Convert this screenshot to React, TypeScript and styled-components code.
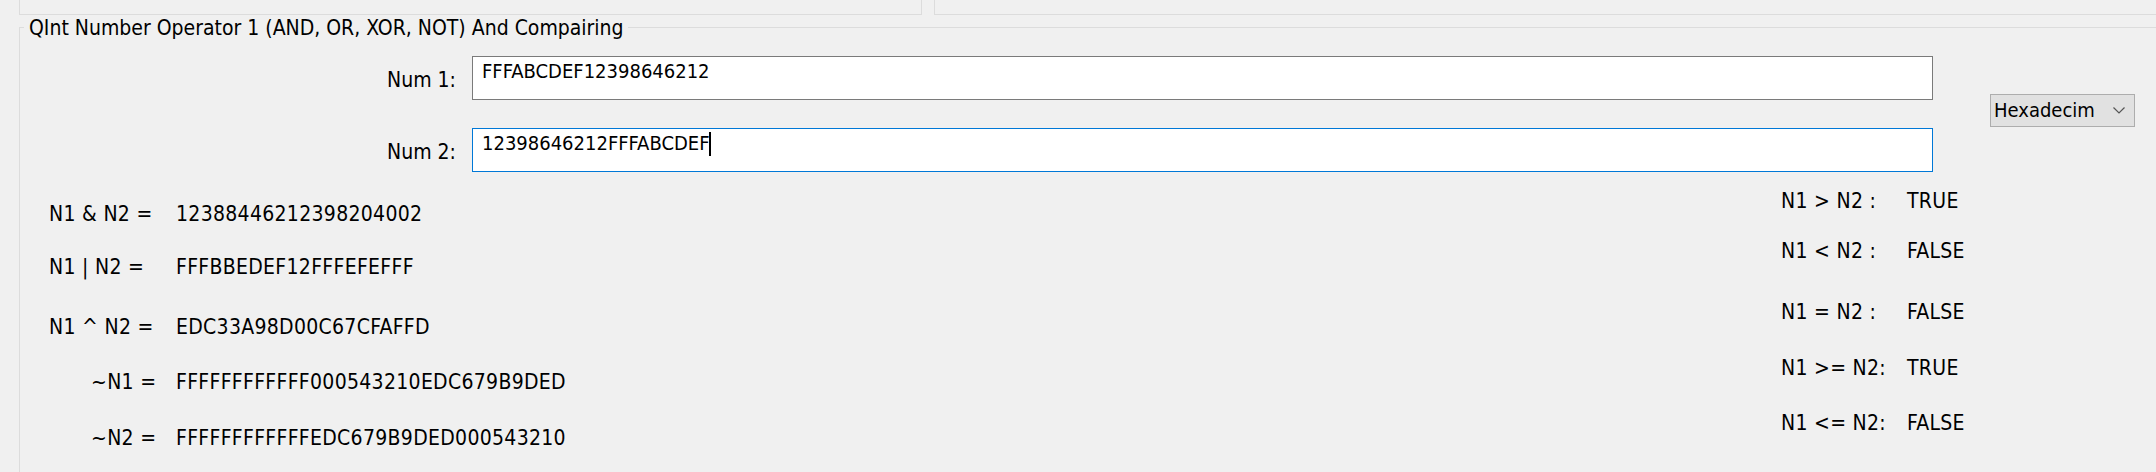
import React from "react";
import styled, { createGlobalStyle } from "styled-components";

const Global = createGlobalStyle`
  html, body {
    margin: 0;
    padding: 0;
    background: #f0f0f0;
  }
  body {
    font-family: "DejaVu Sans Condensed", "DejaVu Sans", sans-serif;
    font-stretch: semi-condensed;
    font-size: 21px;
    color: #000;
  }
`;

const Page = styled.div`
  width: 2156px;
  height: 472px;
  overflow: hidden;
  padding-left: 19px;
  box-sizing: border-box;
  background: #f0f0f0;
`;

const TopRow = styled.div`
  display: flex;
  gap: 12px;
  width: 2200px;
`;

const Stub = styled.div<{ $w?: number }>`
  height: 15px;
  box-sizing: border-box;
  border: 1px solid #dcdcdc;
  border-top: none;
  ${(p) => (p.$w ? `width: ${p.$w}px;` : "flex: 1;")}
`;

const Group = styled.div`
  position: relative;
  margin-top: 12px;
  width: 2200px;
  height: 500px;
  box-sizing: border-box;
  border: 1px solid #dcdcdc;
`;

const Legend = styled.span`
  position: absolute;
  top: -11px;
  left: 4px;
  padding: 0 4px 0 5px;
  background: #f0f0f0;
  line-height: 23px;
  white-space: nowrap;
`;

const Inputs = styled.div`
  display: grid;
  grid-template-columns: 436px 1461px 145px;
  grid-template-rows: 44px 44px;
  column-gap: 16px;
  row-gap: 28px;
  padding-top: 28px;
`;

const FieldLabel = styled.div`
  justify-self: end;
  align-self: center;
  line-height: 23px;
  padding-top: 4px;
  white-space: nowrap;
`;

const TextBox = styled.div<{ $focused?: boolean }>`
  box-sizing: border-box;
  height: 44px;
  background: #fff;
  border: 1px solid ${(p) => (p.$focused ? "#0078d7" : "#7a7a7a")};
  padding: 3px 9px;
  font-size: 20px;
  line-height: 23px;
  white-space: nowrap;
  overflow: hidden;
  display: flex;
  align-items: flex-start;
`;

const Caret = styled.span`
  display: inline-block;
  width: 2px;
  height: 24px;
  background: #000;
  margin-left: -1px;
`;

const Combo = styled.div`
  grid-column: 3;
  grid-row: 1 / span 2;
  align-self: center;
  margin-left: 41px;
  margin-bottom: 7px;
  box-sizing: border-box;
  width: 145px;
  height: 33px;
  background: #e1e1e1;
  border: 1px solid #adadad;
  display: flex;
  align-items: center;
  justify-content: space-between;
  padding: 0 9px 0 3px;
  font-size: 20px;
  line-height: 23px;
  white-space: nowrap;
`;

const Results = styled.div`
  display: grid;
  grid-template-columns: 1732px auto;
  padding-left: 29px;
  align-items: start;
`;

const Column = styled.div<{ $top: number }>`
  display: flex;
  flex-direction: column;
  margin-top: ${(p) => p.$top}px;
`;

const Row = styled.div<{ $gap: number; $labelW: number }>`
  display: grid;
  grid-template-columns: ${(p) => p.$labelW}px auto;
  margin-top: ${(p) => p.$gap}px;
  line-height: 23px;
  letter-spacing: 0.3px;
  white-space: nowrap;
`;

const RowLabel = styled.span<{ $indent?: number }>`
  padding-left: ${(p) => p.$indent ?? 0}px;
`;

const ops = [
  { label: "N1 & N2 =", value: "12388446212398204002", gap: 0, indent: 0 },
  { label: "N1 | N2 =", value: "FFFBBEDEF12FFFEFEFFF", gap: 30, indent: 0 },
  { label: "N1 ^ N2 =", value: "EDC33A98D00C67CFAFFD", gap: 37, indent: 0 },
  { label: "~N1 =", value: "FFFFFFFFFFFF000543210EDC679B9DED", gap: 32, indent: 42 },
  { label: "~N2 =", value: "FFFFFFFFFFFFEDC679B9DED000543210", gap: 33, indent: 42 },
];

const cmps = [
  { label: "N1 > N2 :", value: "TRUE", gap: 0 },
  { label: "N1 < N2 :", value: "FALSE", gap: 27 },
  { label: "N1 = N2 :", value: "FALSE", gap: 38 },
  { label: "N1 >= N2:", value: "TRUE", gap: 33 },
  { label: "N1 <= N2:", value: "FALSE", gap: 32 },
];

export default function App() {
  return (
    <>
      <Global />
      <Page>
        <TopRow>
          <Stub $w={903} />
          <Stub />
        </TopRow>
        <Group>
          <Legend>QInt Number Operator 1 (AND, OR, XOR, NOT) And Compairing</Legend>
          <Inputs>
            <FieldLabel>Num 1:</FieldLabel>
            <TextBox>FFFABCDEF12398646212</TextBox>
            <Combo>
              <span>Hexadecim</span>
              <svg width="12" height="7" viewBox="0 0 12 7">
                <polyline points="0.5,0.5 6,6 11.5,0.5" fill="none" stroke="#555" strokeWidth="1.2" />
              </svg>
            </Combo>
            <FieldLabel>Num 2:</FieldLabel>
            <TextBox $focused>
              12398646212FFFABCDEF
              <Caret />
            </TextBox>
          </Inputs>
          <Results>
            <Column $top={31}>
              {ops.map((o) => (
                <Row key={o.label} $gap={o.gap} $labelW={127}>
                  <RowLabel $indent={o.indent}>{o.label}</RowLabel>
                  <span>{o.value}</span>
                </Row>
              ))}
            </Column>
            <Column $top={18}>
              {cmps.map((c) => (
                <Row key={c.label} $gap={c.gap} $labelW={126}>
                  <RowLabel>{c.label}</RowLabel>
                  <span>{c.value}</span>
                </Row>
              ))}
            </Column>
          </Results>
        </Group>
      </Page>
    </>
  );
}
